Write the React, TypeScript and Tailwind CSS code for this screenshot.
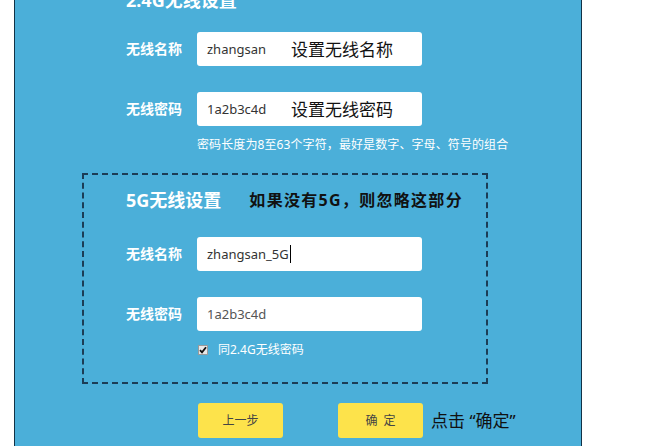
import React from 'react'

const FONT = '"Noto Sans", "Noto Sans CJK SC", sans-serif'

function Field({ label, value, note, valueClass = 'text-[#333]', caret = false }: {
  label: string
  value: string
  note?: string
  valueClass?: string
  caret?: boolean
}) {
  return (
    <div className="flex items-center h-[34px]">
      <div className="w-[71px] text-[14px] font-bold text-white leading-none">{label}</div>
      <div className="w-[225px] h-[34px] bg-white rounded-[3px] flex items-center pl-[10px]">
        <span className={`text-[13px] leading-none ${valueClass}`}>{value}</span>
        {caret && <span className="ml-[1px] w-px h-[18px] bg-black" />}
        {note && (
          <span className="ml-auto mr-[29px] text-[17px] text-[#111] leading-none">{note}</span>
        )}
      </div>
    </div>
  )
}

function YellowButton({ children }: { children: React.ReactNode }) {
  return (
    <button
      type="button"
      className="w-[85px] h-[35px] bg-[#fde34b] rounded-[3px] text-[12px] text-[#444] leading-none"
    >
      {children}
    </button>
  )
}

export default function App() {
  return (
    <div className="w-[651px] h-[446px] bg-white overflow-hidden flex" style={{ fontFamily: FONT }}>
      <div className="ml-[14px] w-[568px] h-[446px] bg-[#4bafd9] border-x border-[#123246] overflow-hidden">
        <div className="pl-[111px]">
          {/* 2.4G block, title scrolled mostly out of view */}
          <div className="-mt-[13px] h-[26px] text-[18px] font-bold text-white leading-[26px]">2.4G无线设置</div>

          <div className="mt-[19px]">
            <Field label="无线名称" value="zhangsan" note="设置无线名称" />
          </div>
          <div className="mt-[26px]">
            <Field label="无线密码" value="1a2b3c4d" note="设置无线密码" />
          </div>
          <div className="mt-[10px] ml-[71px] h-[18px] text-[12px] text-white leading-[18px] tracking-[0.1px]">
            密码长度为8至63个字符，最好是数字、字母、符号的组合
          </div>
        </div>

        {/* 5G block, annotated with a dashed frame */}
        <div className="mt-[19px] ml-[67px] w-[406px] h-[211px] border-2 border-dashed border-[#1c3d56] pl-[42px] pt-[12px]">
          <div className="flex items-center h-[26px]">
            <span className="text-[18px] font-bold text-white leading-none">5G无线设置</span>
            <span className="ml-[28px] text-[16px] font-bold text-[#111] tracking-[1.3px] leading-none">
              如果没有5G，则忽略这部分
            </span>
          </div>
          <div className="mt-[24px]">
            <Field label="无线名称" value="zhangsan_5G" caret />
          </div>
          <div className="mt-[26px]">
            <Field label="无线密码" value="1a2b3c4d" valueClass="text-[#555]" />
          </div>
          <div className="mt-[10px] ml-[72px] h-[18px] flex items-center">
            <span className="w-[10px] h-[10px] bg-[#e8e8e8] border border-[#9a9a9a] flex items-center justify-center">
              <svg width="8" height="8" viewBox="0 0 8 8">
                <path d="M1 4.2 L3 6.4 L7 1.2" fill="none" stroke="#111" strokeWidth="1.8" />
              </svg>
            </span>
            <span className="ml-[10px] text-[12px] text-white leading-none">同2.4G无线密码</span>
          </div>
        </div>

        <div className="mt-[19px] ml-[183px] flex items-center">
          <YellowButton>上一步</YellowButton>
          <div className="ml-[55px]">
            <YellowButton>{'确\u00a0\u00a0定'}</YellowButton>
          </div>
          <span className="ml-[8px] text-[17px] text-[#111] leading-none">{'点击 \u201c确定\u201d'}</span>
        </div>
      </div>
    </div>
  )
}
